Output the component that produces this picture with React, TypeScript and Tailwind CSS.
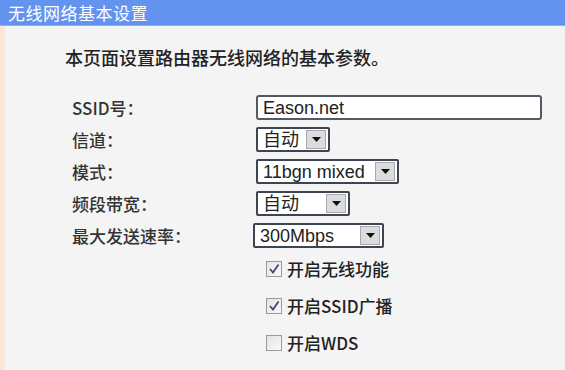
import React from "react";

const cjk = { fontFamily: '"Noto Sans CJK SC", "Noto Sans", sans-serif' };
const latin = { fontFamily: '"Liberation Sans", "Noto Sans CJK SC", sans-serif' };

function Arrow() {
  return (
    <div className="ml-auto mr-[2px] flex h-[19px] w-[20px] items-center justify-center border border-[#a9a9a9] bg-[#dcdcdc]">
      <svg width="9" height="5" viewBox="0 0 9 5">
        <polygon points="0,0 9,0 4.5,5" fill="#111" />
      </svg>
    </div>
  );
}

function Select({ value, w, cn = "" }: { value: string; w: string; cn?: string }) {
  return (
    <div
      className={`flex h-[25px] items-center rounded-[2px] border-2 border-[#3e4552] bg-white pl-[5px] text-[18px] leading-none text-[#222] ${w} ${cn}`}
      style={latin}
    >
      <span className="whitespace-nowrap">{value}</span>
      <Arrow />
    </div>
  );
}

function Check({ checked, label }: { checked: boolean; label: string }) {
  return (
    <div className="flex h-[37px] items-center">
      <div className="ml-[261px] flex h-[16px] w-[16px] items-center justify-center border border-[#9a9a9a] bg-gradient-to-br from-[#e3e3e3] to-[#fafafa]">
        {checked && (
          <svg width="12" height="12" viewBox="0 0 12 12">
            <polyline points="2,6 5,9.5 10.5,1.5" fill="none" stroke="#3a4a7c" strokeWidth="1.8" />
          </svg>
        )}
      </div>
      <span className="ml-[5px] text-[17px] font-medium leading-none text-[#222]" style={cjk}>
        {label}
      </span>
    </div>
  );
}

export default function App() {
  const labels = ["SSID号：", "信道：", "模式：", "频段带宽：", "最大发送速率："];
  return (
    <div className="flex h-[370px] w-[565px] flex-col overflow-hidden bg-[#f4f4f4]">
      <div className="flex h-[26px] shrink-0 items-center border-b border-[#8fb0f2] bg-[#6392ef] pl-[8px]">
        <span className="text-[17px] leading-none tracking-[0.5px] text-white" style={cjk}>
          无线网络基本设置
        </span>
      </div>
      <div className="flex flex-1 border-l-[5px] border-[#fbe6d6]">
        <div className="flex flex-1 flex-col">
          <div className="ml-[60px] mt-[19px] text-[18px] font-medium leading-[24px] text-[#222]" style={cjk}>
            本页面设置路由器无线网络的基本参数。
          </div>
          <div className="mt-[26px] flex flex-col gap-[7px]">
            {labels.map((l, i) => (
              <div key={l} className="flex h-[25px] items-center">
                <div className="ml-[67px] w-[184px] text-[17px] font-medium leading-none text-[#333]" style={cjk}>
                  {l}
                </div>
                {i === 0 && (
                  <div
                    className="flex h-[25px] w-[286px] items-center rounded-[3px] border-2 border-[#555a62] bg-white pl-[5px] text-[18px] leading-none text-[#222]"
                    style={latin}
                  >
                    Eason.net
                  </div>
                )}
                {i === 1 && <Select value="自动" w="w-[74px]" />}
                {i === 2 && <Select value="11bgn mixed" w="w-[143px]" />}
                {i === 3 && <Select value="自动" w="w-[94px]" />}
                {i === 4 && <Select value="300Mbps" w="w-[131px]" cn="-ml-[3px]" />}
              </div>
            ))}
          </div>
          <div className="mt-[2px] flex flex-col">
            <Check checked label="开启无线功能" />
            <Check checked label="开启SSID广播" />
            <Check checked={false} label="开启WDS" />
          </div>
        </div>
      </div>
    </div>
  );
}
